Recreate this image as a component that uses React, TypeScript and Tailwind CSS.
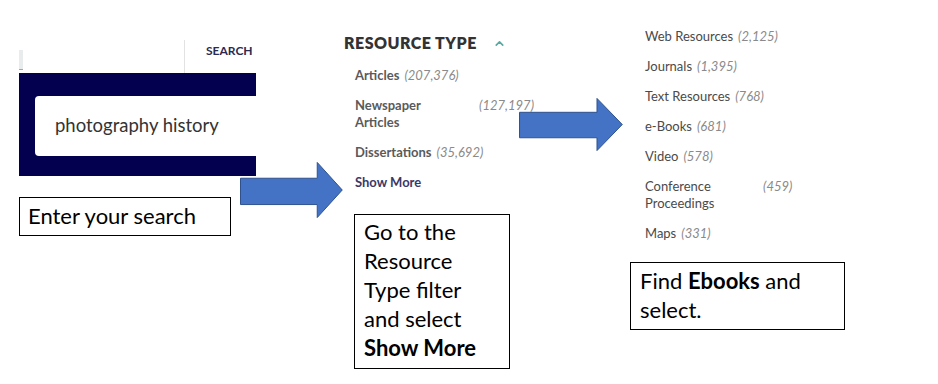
import { ChevronUp } from "lucide-react";

type Facet = {
  label: string;
  count: string;
  labelWidth?: string;
};

const resourceTypes: Facet[] = [
  { label: "Articles", count: "207,376" },
  { label: "Newspaper Articles", count: "127,197", labelWidth: "w-[125px] pr-[40px]" },
  { label: "Dissertations", count: "35,692" },
];

const moreTypes: Facet[] = [
  { label: "Web Resources", count: "2,125" },
  { label: "Journals", count: "1,395" },
  { label: "Text Resources", count: "768" },
  { label: "e-Books", count: "681" },
  { label: "Video", count: "578" },
  { label: "Conference Proceedings", count: "459", labelWidth: "w-[118px] pr-[20px]" },
  { label: "Maps", count: "331" },
];

const uiFont = "font-['Lato','Liberation_Sans',sans-serif]";
const noteFont = "font-['Lato','Open_Sans',sans-serif]";

function Arrow({ className, body, head }: { className: string; body: [number, number]; head: number }) {
  // drawn inside a 100x100 box, stretched to the element's size
  const [top, bottom] = body;
  return (
    <svg
      className={`absolute ${className}`}
      viewBox="0 0 100 100"
      preserveAspectRatio="none"
    >
      <polygon
        points={`0.5,${top} ${head},${top} ${head},0.8 99.3,50 ${head},99.2 ${head},${bottom} 0.5,${bottom}`}
        fill="#4472c4"
        stroke="#2f528f"
        strokeWidth="1"
        vectorEffect="non-scaling-stroke"
      />
    </svg>
  );
}

function FacetRow({ facet }: { facet: Facet }) {
  return (
    <div className="flex leading-[17px]">
      <span className={facet.labelWidth ?? "mr-[5px]"}>{facet.label}</span>
      <span className="italic text-[#8a8a8a] font-normal">({facet.count})</span>
    </div>
  );
}

export default function App() {
  return (
    <div className="relative flex w-[938px] h-[384px] overflow-hidden bg-white">
      {/* search column */}
      <div className="ml-[19px] w-[237px] flex flex-col pt-[40px]">
        <div className="flex h-[33px]">
          <div className="w-[165px] pt-[10px]">
            <div className="w-[4px] h-[20px] bg-[#e8ecec] border-b border-[#9aa]" />
          </div>
          <div className={`border-l border-[#e2e2e2] pl-[21px] pt-[4px] text-[12px] leading-[14px] font-bold text-[#2b2b52] ${uiFont}`}>
            SEARCH
          </div>
        </div>
        <div className="h-[103px] bg-[#02004f] pl-[16px] pt-[23px]">
          <div className={`h-[60px] bg-white rounded-l-[4px] flex items-center pl-[20px] text-[18.5px] text-[#333] ${uiFont}`}>
            photography history
          </div>
        </div>
        <div className={`mt-[21px] w-[212px] h-[39px] border border-black flex items-center pl-[8px] pb-[3px] text-[22px] text-black ${noteFont}`}>
          Enter your search
        </div>
      </div>

      {/* resource type column */}
      <div className="ml-[88px] w-[190px] pt-[33px]">
        <div className={`flex items-center h-[20px] text-[16px] font-extrabold tracking-[0.03em] text-[#333] ${uiFont}`}>
          RESOURCE TYPE
          <ChevronUp className="ml-[16px] w-[13px] h-[13px] text-[#5aa8a0]" strokeWidth={3} />
        </div>
        <div className={`pl-[11px] mt-[14px] flex flex-col gap-[13px] text-[13px] font-bold text-[#5a5a5a] ${uiFont}`}>
          {resourceTypes.map((f) => (
            <FacetRow key={f.label} facet={f} />
          ))}
          <div className="leading-[17px] text-[#3b3868]">Show More</div>
        </div>
        <div className={`ml-[10px] mt-[23px] w-[156px] h-[155px] border border-black pl-[9px] pt-[2px] text-[22px] leading-[29px] text-black ${noteFont}`}>
          Go to the
          <br />
          Resource
          <br />
          Type filter
          <br />
          and select
          <br />
          <b>Show More</b>
        </div>
      </div>

      {/* expanded list column */}
      <div className="ml-[96px] w-[240px] pt-[28px]">
        <div className={`pl-[15px] flex flex-col gap-[13px] text-[13px] text-[#4a4a4a] ${uiFont}`}>
          {moreTypes.map((f) => (
            <FacetRow key={f.label} facet={f} />
          ))}
        </div>
        <div className={`mt-[20px] w-[215px] h-[68px] border border-black pl-[9px] pt-[3px] text-[22px] leading-[29px] text-black ${noteFont}`}>
          Find <b>Ebooks</b> and
          <br />
          select.
        </div>
      </div>

      <Arrow className="left-[240px] top-[162px] w-[103px] h-[56px]" body={[29, 76]} head={75} />
      <Arrow className="left-[519px] top-[98px] w-[104px] h-[53px]" body={[27, 75]} head={75} />
    </div>
  );
}
